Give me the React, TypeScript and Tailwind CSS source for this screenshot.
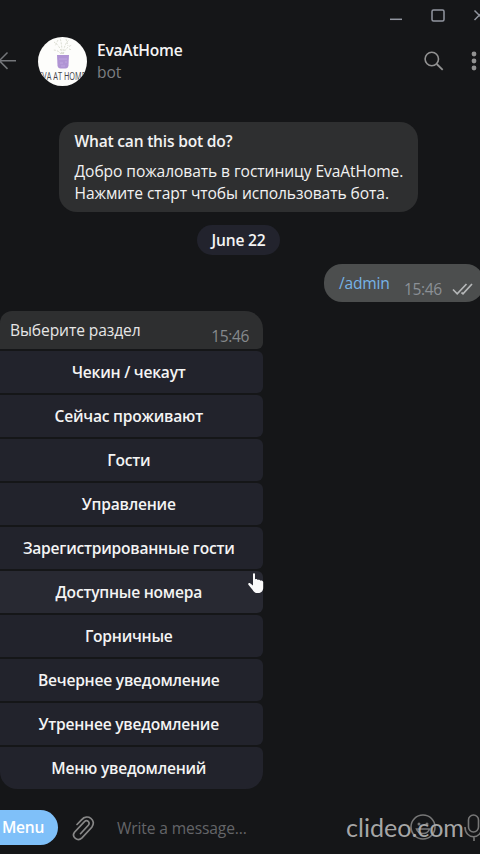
import React from "react";

const sections: { label: string; hovered?: boolean }[] = [
  { label: "Чекин / чекаут" },
  { label: "Сейчас проживают" },
  { label: "Гости" },
  { label: "Управление" },
  { label: "Зарегистрированные гости" },
  { label: "Доступные номера", hovered: true },
  { label: "Горничные" },
  { label: "Вечернее уведомление" },
  { label: "Утреннее уведомление" },
  { label: "Меню уведомлений" },
];

function TitleBar() {
  return (
    <div className="flex h-[30px] justify-end">
      <svg width="96" height="30" viewBox="0 0 96 30" fill="none" stroke="#9296a0" strokeWidth="1.5">
        <path d="M6 19.3h12" />
        <rect x="48" y="10" width="12" height="11" rx="1.5" />
        <path d="M90.5 10.500l9.500 9.500M90.500 20l9.500-9.500" />
      </svg>
    </div>
  );
}

function Avatar() {
  return (
    <svg className="ml-[22px] shrink-0" width="49" height="49" viewBox="0 0 49 49">
      <defs>
        <clipPath id="round">
          <circle cx="24.500" cy="24.500" r="24.500" />
        </clipPath>
      </defs>
      <g clipPath="url(#round)">
        <rect width="49" height="49" fill="#fdfdfb" />
        <g fill="none" stroke="#d3d6c9" strokeWidth="0.8" strokeDasharray="2 1.200">
          <path d="M24 17C23 11 19 7 16 5M24 17C24 9 23 4 22 1M25 17C26 10 28 5 31 3M25 17C27 12 31 9 34 8M23 17C21 14 18 13 15 13M20 3l-3 6M28 2l2 7M31 12l3 1" />
        </g>
        <path d="M19 18h12l-.5 10.500q-.4 3-3 3h-5q-2.600 0-3-3z" fill="#b094d4" />
        <path d="M21 22h8M22 26h3M27 25h2M23 29h4" stroke="#bfa7df" strokeWidth="1" />
        <text transform="translate(24 43) scale(0.640 1)" textAnchor="middle" fontFamily="Open Sans, sans-serif" fontSize="11.500" fill="#44444a">
          EVA AT HOME
        </text>
      </g>
    </svg>
  );
}

function Header() {
  return (
    <header className="flex h-[62px] items-center">
      <svg className="shrink-0" width="16" height="24" viewBox="0 0 16 24" fill="none" stroke="#74767a" strokeWidth="1.500">
        <path d="M16 11.700H0M7.500 3.500L-.7 11.700l8.200 8.200" />
      </svg>
      <Avatar />
      <div className="ml-[10px] flex flex-col">
        <span className="text-[15.6px] leading-[22px] font-semibold tracking-[-0.25px] text-[#f4f4f4]">EvaAtHome</span>
        <span className="text-[15.6px] leading-[22px] tracking-[-0.1px] text-[#7d7f82]">bot</span>
      </div>
      <svg className="ml-auto shrink-0" width="58" height="26" viewBox="422 48 58 26" fill="none">
        <circle cx="431.800" cy="59" r="6.700" stroke="#929292" strokeWidth="1.600" />
        <path d="M436.700 64l6 5.800" stroke="#929292" strokeWidth="1.800" />
        <g fill="#929292">
          <circle cx="474" cy="54" r="2.400" />
          <circle cx="474" cy="61" r="2.400" />
          <circle cx="474" cy="68" r="2.400" />
        </g>
      </svg>
    </header>
  );
}

function Cursor() {
  return (
    <svg className="absolute top-[2px] left-[248px]" width="17" height="22" viewBox="0 0 17 22" fill="#fafafa">
      <path d="M5 1.200c0-1.200 2-1.200 2 0V6.500c.5-.8 2.400-.6 2.600.6.700-.8 2.400-.5 2.600.6.900-.7 3 .1 3 1.400v5.600c0 3.300-2.300 5.300-5 5.300H9c-2 0-3.400-1.400-4.300-3L.4 11.700c-.8-1.200.9-2.300 2-1.300L5 12.500z" />
    </svg>
  );
}

function Composer() {
  return (
    <footer className="relative flex h-[65px] items-center pt-[12px]">
      <div className="flex h-[35px] w-[58px] items-center rounded-r-full bg-[#7fc0f9] pt-[1px] pl-[2px] text-[15.6px] font-semibold tracking-[-0.25px] text-white">
        Menu
      </div>
      <svg className="ml-[14px]" width="24" height="28" viewBox="72 814 24 28" fill="none" stroke="#878787" strokeWidth="1.700" strokeLinecap="round">
        <path d="M77 824.500l4.500-4.700c6-6.500 15.500.2 10.300 7.400l-9.800 10.700c-4.400 4.300-10.800-1-7.500-5.700l9.700-10.400c3-2.600 6.300.4 4.100 3.400l-7.800 8.500" />
      </svg>
      <span className="ml-[21px] pt-[2px] text-[15.6px] tracking-[-0.13px] text-[#646568]">Write a message...</span>
      <svg className="absolute top-[18px] left-[340px]" width="140" height="42" viewBox="340 807 140 42" fill="none">
        <g stroke="#777777" strokeWidth="1.600">
          <circle cx="423" cy="827" r="12" />
          <path d="M416.500 829c2 6 11 6 13 0z" />
          <rect x="468.500" y="815" width="10" height="17" rx="5" />
          <path d="M465 827c0 13 17 13 17 0M474 837v4" />
        </g>
        <g fill="#777777">
          <circle cx="419" cy="824" r="1.500" />
          <circle cx="427" cy="824" r="1.500" />
        </g>
        <text x="346" y="836.500" textLength="118" lengthAdjust="spacingAndGlyphs" fontFamily="Lato, sans-serif" fontSize="24.500" fill="#b0b0b0" fillOpacity="0.95">
          clideo.com
        </text>
      </svg>
    </footer>
  );
}

export default function App() {
  return (
    <div className="flex h-[854px] w-[480px] flex-col overflow-hidden bg-[#151618] font-['Open_Sans','Noto_Sans',sans-serif]">
      <TitleBar />
      <Header />
      <main className="flex h-[697px] flex-col pt-[30px]">
        <section className="ml-[59px] h-[90px] w-[359px] rounded-[18px] bg-[#2e2f30] pt-[9px] pl-[15.500px] text-[15.6px] leading-[21px] tracking-[-0.08px] whitespace-nowrap text-[#f2f2f2]">
          <h1 className="font-semibold tracking-[-0.22px]">What can this bot do?</h1>
          <p className="mt-[9px] leading-[21.5px]">
            Добро пожаловать в гостиницу EvaAtHome.
            <br />
            Нажмите старт чтобы использовать бота.
          </p>
        </section>
        <div className="mt-[13px] ml-[197px] flex h-[30px] w-[83px] items-center justify-center rounded-full bg-[#22232d] pt-[2px] text-[15.6px] font-semibold tracking-[-0.22px] text-[#f4f4f4]">
          June 22
        </div>
        <div className="mt-[9px] -mr-[4px] flex h-[38px] w-[160px] self-end rounded-[18px] bg-[#4c4e4e] pl-[15px] text-[15.6px] leading-[22px]">
          <span className="w-[51px] pt-[8px] tracking-[-0.22px] text-[#77b3e6]">/admin</span>
          <span className="ml-[14px] w-[38px] pt-[14px] tracking-[-0.4px] text-[#8b9096]">15:46</span>
          <svg className="mt-[18px] ml-[10px]" width="21" height="14" viewBox="0 0 21 14" fill="none" stroke="#b5b7b8" strokeWidth="1.700">
            <path d="M1 7.500l4.200 4.300L14.500 2M9.500 10.500l1.500 1.300L20 2" />
          </svg>
        </div>
        <div className="mt-[9px] flex h-[39px] w-[262.500px] rounded-tl-[12px] rounded-tr-[18px] rounded-br-[6px] bg-[#2e2f30] pl-[10px] text-[15.6px] leading-[22px]">
          <span className="pt-[8px] tracking-[-0.1px] text-[#e6e6e6]">Выберите раздел</span>
          <span className="mr-[13.500px] ml-auto pt-[14px] tracking-[-0.4px] text-[#85898c]">15:46</span>
        </div>
        <div className="mt-[1.500px] flex w-[262.500px] flex-col gap-[2px] text-[15.6px] font-semibold tracking-[-0.24px] text-[#f4f4f4]">
          {sections.map((s) => (
            <div
              key={s.label}
              className={
                "relative flex h-[42px] items-center justify-center rounded-r-[6px] pt-[1px] pr-[5px] whitespace-nowrap last:rounded-b-[17px] " +
                (s.hovered ? "bg-[#282932]" : "bg-[#22232c]")
              }
            >
              {s.label}
              {s.hovered && <Cursor />}
            </div>
          ))}
        </div>
      </main>
      <Composer />
    </div>
  );
}
